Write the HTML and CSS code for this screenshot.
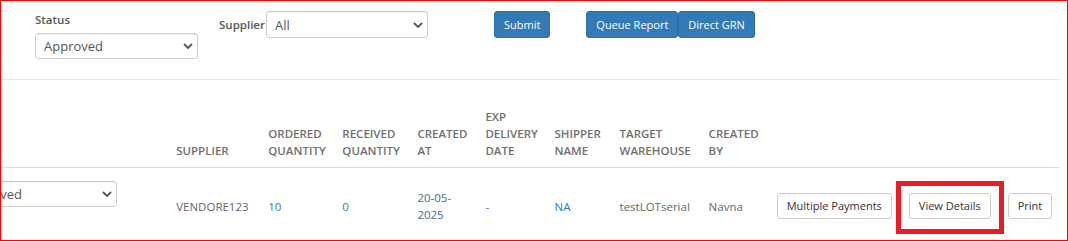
FILE: index.html
```html
<!doctype html>
<html lang="en">
<head>
	<meta charset="UTF-8" />
	<title>Purchase Orders</title>
	<link rel="stylesheet" href="styles.css">
</head>
<body>
    <!--outer frame-->
    <div class="frame">
        <div class="panel">
            <!--filters-->
            <form class="filters">
                <div class="field">
                    <label class="field-label">Status</label>
                    <div class="select-box status-select">
                        <select>
                            <option>Approved</option>
                            <option>Pending</option>
                        </select>
                        <svg class="caret" width="10" height="6" viewBox="0 0 10 6"><path d="M1 1l4 4 4-4" fill="none" stroke="#555" stroke-width="1.8"/></svg>
                    </div>
                </div>
                <div class="field field-inline">
                    <label class="field-label">Supplier</label>
                    <div class="select-box supplier-select">
                        <select>
                            <option>All</option>
                        </select>
                        <svg class="caret" width="10" height="6" viewBox="0 0 10 6"><path d="M1 1l4 4 4-4" fill="none" stroke="#555" stroke-width="1.8"/></svg>
                    </div>
                </div>
                <button type="button" class="btn btn-primary btn-submit">Submit</button>
                <div class="btn-group">
                    <button type="button" class="btn btn-primary">Queue Report</button>
                    <button type="button" class="btn btn-primary">Direct GRN</button>
                </div>
            </form>

            <!--table, scrolled a little to the right-->
            <div class="table-wrap">
                <table class="po-table">
                    <colgroup>
                        <col style="width:222px">
                        <col style="width:92px">
                        <col style="width:74px">
                        <col style="width:75px">
                        <col style="width:68px">
                        <col style="width:69px">
                        <col style="width:65px">
                        <col style="width:89px">
                        <col style="width:68px">
                        <col style="width:291px">
                    </colgroup>
                    <thead>
                        <tr>
                            <th></th>
                            <th>Supplier</th>
                            <th>Ordered Quantity</th>
                            <th>Received Quantity</th>
                            <th>Created At</th>
                            <th>Exp Delivery Date</th>
                            <th>Shipper Name</th>
                            <th>Target Warehouse</th>
                            <th>Created By</th>
                            <th></th>
                        </tr>
                    </thead>
                    <tbody>
                        <tr class="po-row">
                            <td class="cell-status">
                                <div class="select-box status-select">
                                    <select>
                                        <option>Approved</option>
                                    </select>
                                    <svg class="caret" width="10" height="6" viewBox="0 0 10 6"><path d="M1 1l4 4 4-4" fill="none" stroke="#555" stroke-width="1.8"/></svg>
                                </div>
                            </td>
                            <td>VENDORE123</td>
                            <td class="num">10</td>
                            <td class="num">0</td>
                            <td class="date">20-05-2025</td>
                            <td class="num">-</td>
                            <td class="num">NA</td>
                            <td>testLOTserial</td>
                            <td>Navna</td>
                            <td class="actions">
                                <button type="button" class="btn btn-default">Multiple Payments</button>
                                <span class="marked">
                                    <button type="button" class="btn btn-default">View Details</button>
                                    <span class="mark"></span>
                                </span>
                                <button type="button" class="btn btn-default">Print</button>
                            </td>
                        </tr>
                    </tbody>
                </table>
            </div>
        </div>
    </div>
</body>
</html>
```

FILE: styles.css
```css
* {
    padding: 0;
    margin: 0;
    box-sizing: border-box;
}

body {
    font-family: "Open Sans", "Liberation Sans", sans-serif;
    font-size: 11.5px;
    line-height: 17px;
    color: #555;
    background: #fff;
}

.frame {
    height: 241px;
    border: 1px solid #f00;
    overflow: hidden;
}

.panel {
    margin-right: 7px;
}

/* filters */
.filters {
    display: flex;
    align-items: flex-start;
    height: 79px;
    padding: 10px 0 0 34px;
    border-bottom: 1px solid #e6e6e6;
}

.field {
    display: flex;
    flex-direction: column;
    margin-right: 21px;
}

.field-label {
    font-weight: 600;
    color: #555;
    margin-bottom: 5px;
}

.field-inline {
    flex-direction: row;
    align-items: center;
    margin-right: 66px;
}

.field-inline .field-label {
    margin: 0 1px 0 0;
}

.select-box {
    position: relative;
}

.select-box select {
    appearance: none;
    -webkit-appearance: none;
    width: 100%;
    height: 100%;
    border: 1px solid #ccc;
    border-radius: 3px;
    background: #fff;
    font-family: inherit;
    font-size: 13px;
    color: #555;
    padding: 0 20px 0 8px;
    box-shadow: inset 0 1px 1px rgba(0,0,0,.05);
}

.select-box .caret {
    position: absolute;
    right: 5px;
    top: 50%;
    margin-top: -3px;
}

.status-select {
    width: 163px;
    height: 26px;
}

.supplier-select {
    width: 162px;
    height: 27px;
}

.btn {
    display: inline-block;
    height: 27px;
    padding: 0 9px;
    border: 1px solid transparent;
    border-radius: 3px;
    font-family: inherit;
    font-size: 11px;
    line-height: 25px;
    cursor: pointer;
    white-space: nowrap;
}

.btn-primary {
    background: #337ab7;
    border-color: #2e6da4;
    color: #fff;
}

.btn-submit {
    margin-right: 36px;
}

.btn-group {
    display: flex;
}

.btn-default {
    height: 26px;
    line-height: 24px;
    background: #fff;
    border-color: #ccc;
    color: #333;
}

/* table */
.table-wrap {
    margin-top: 20px;
    overflow: hidden;
}

.po-table {
    table-layout: fixed;
    width: 1114px;
    margin-left: -55px;
    border-collapse: collapse;
}

.po-table th {
    padding: 8px;
    vertical-align: bottom;
    text-align: left;
    font-weight: 600;
    text-transform: uppercase;
    color: #6f6f6f;
    border-bottom: 1px solid #ddd;
}

.po-table td {
    padding: 8px;
    vertical-align: middle;
    color: #666;
}

.po-row {
    height: 77px;
}

.po-table td.num {
    color: #337ab7;
}

.po-table td.date {
    color: #4a6b8a;
}

.po-table td.cell-status {
    vertical-align: top;
    padding-top: 13px;
}

.actions {
    white-space: nowrap;
}

.actions .btn {
    margin-right: 14px;
}

.actions .btn:last-child {
    margin-right: 0;
}

.marked {
    position: relative;
    display: inline-block;
    margin-right: 14px;
}

.marked .btn {
    margin-right: 0;
}

.mark {
    position: absolute;
    top: -12px;
    left: -13px;
    right: -13px;
    bottom: -15px;
    border: 5px solid #ed1c24;
}
```
